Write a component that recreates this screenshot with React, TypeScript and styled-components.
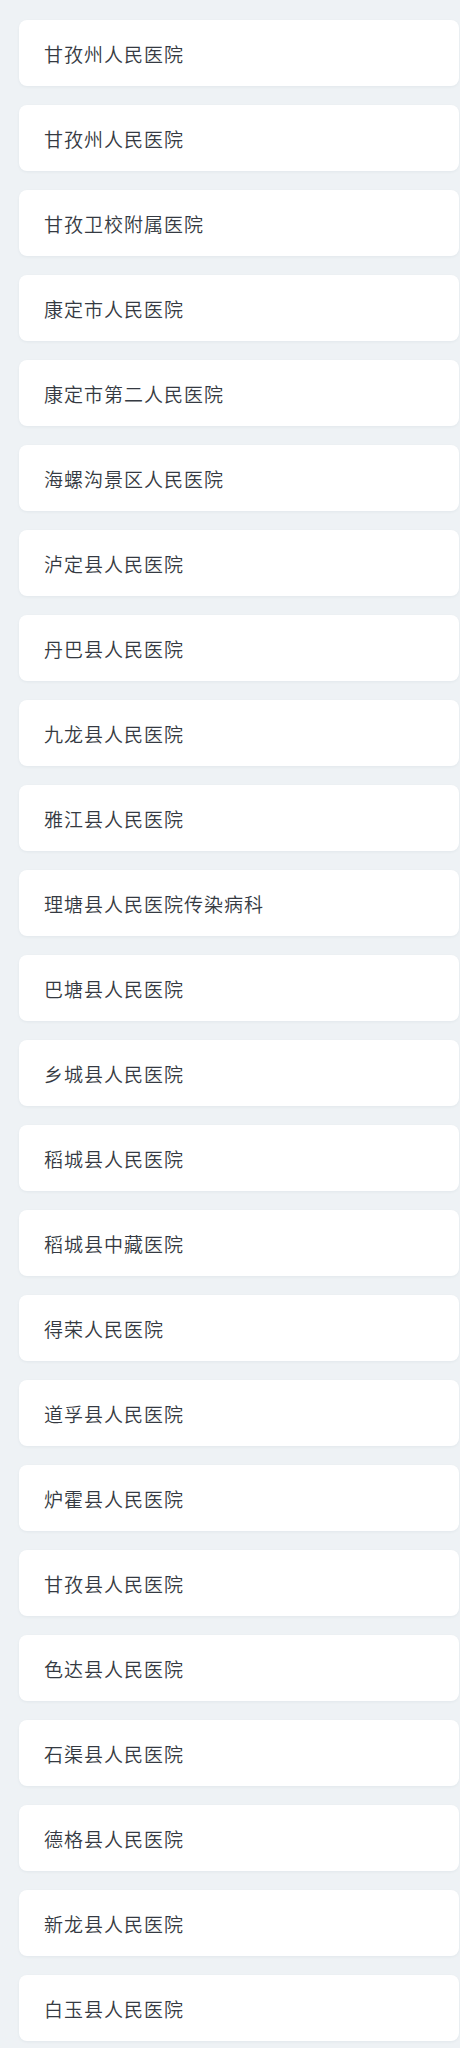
import styled, { createGlobalStyle } from "styled-components";

const GlobalStyle = createGlobalStyle`
  html, body {
    margin: 0;
    padding: 0;
    background: #eef2f5;
  }
`;

const Page = styled.main`
  box-sizing: border-box;
  width: 460px;
  min-height: 2048px;
  padding: 20px 1px 0 19px;
  background: #eef2f5;
  border-top: 3px solid #f3f6f8;
  margin-top: -3px;
  font-family: "Noto Sans CJK SC", "Noto Sans", sans-serif;
`;

const List = styled.ul`
  list-style: none;
  margin: 0;
  padding: 0;
  display: flex;
  flex-direction: column;
  gap: 19px;
`;

const HospitalCard = styled.li`
  box-sizing: border-box;
  height: 66px;
  display: flex;
  align-items: center;
  padding-left: 25px;
  background: #ffffff;
  border-radius: 8px;
  box-shadow: 0 1px 3px rgba(40, 60, 80, 0.06);
  color: #353a42;
  font-size: 19px;
  font-weight: 350;
  letter-spacing: 1px;
`;

const hospitals = [
  "甘孜州人民医院",
  "甘孜州人民医院",
  "甘孜卫校附属医院",
  "康定市人民医院",
  "康定市第二人民医院",
  "海螺沟景区人民医院",
  "泸定县人民医院",
  "丹巴县人民医院",
  "九龙县人民医院",
  "雅江县人民医院",
  "理塘县人民医院传染病科",
  "巴塘县人民医院",
  "乡城县人民医院",
  "稻城县人民医院",
  "稻城县中藏医院",
  "得荣人民医院",
  "道孚县人民医院",
  "炉霍县人民医院",
  "甘孜县人民医院",
  "色达县人民医院",
  "石渠县人民医院",
  "德格县人民医院",
  "新龙县人民医院",
  "白玉县人民医院",
];

export default function App() {
  return (
    <>
      <GlobalStyle />
      <Page>
        <List>
          {hospitals.map((name, i) => (
            <HospitalCard key={i}>{name}</HospitalCard>
          ))}
        </List>
      </Page>
    </>
  );
}
